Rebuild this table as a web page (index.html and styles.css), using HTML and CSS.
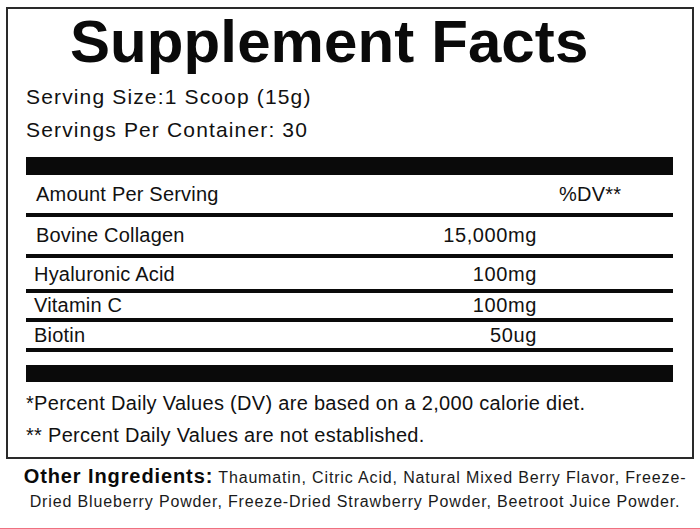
FILE: index.html
```html
<!DOCTYPE html>
<html>
<head>
<meta charset="utf-8">
<link rel="stylesheet" href="styles.css">
</head>
<body>
<div class="label">
  <h1 class="title">Supplement Facts</h1>
  <div class="serving">
    <div class="serving-line">Serving Size:1 Scoop (15g)</div>
    <div class="serving-line">Servings Per Container: 30</div>
  </div>
  <div class="bar bar-top"></div>
  <div class="row row-head"><span class="name">Amount Per Serving</span><span class="val"></span><span class="dv">%DV**</span></div>
  <div class="rule"></div>
  <div class="row row-bovine"><span class="name">Bovine Collagen</span><span class="val">15,000mg</span><span class="dv"></span></div>
  <div class="rule"></div>
  <div class="row row-hya"><span class="name tight">Hyaluronic Acid</span><span class="val">100mg</span><span class="dv"></span></div>
  <div class="rule"></div>
  <div class="row row-vit"><span class="name tight">Vitamin C</span><span class="val">100mg</span><span class="dv"></span></div>
  <div class="rule"></div>
  <div class="row row-bio"><span class="name tight">Biotin</span><span class="val">50ug</span><span class="dv"></span></div>
  <div class="rule"></div>
  <div class="bar bar-bottom"></div>
  <div class="notes">
    <div class="note">*Percent Daily Values (DV) are based on a 2,000 calorie diet.</div>
    <div class="note">** Percent Daily Values are not established.</div>
  </div>
</div>
<p class="other"><strong class="other-title">Other Ingredients:</strong> Thaumatin, Citric Acid, Natural Mixed Berry Flavor, Freeze-<br>Dried Blueberry Powder, Freeze-Dried Strawberry Powder, Beetroot Juice Powder.</p>
<div class="pink"></div>
</body>
</html>
```

FILE: styles.css
```css
html, body {
  margin: 0;
  padding: 0;
  background: #ffffff;
}

body {
  width: 700px;
  height: 529px;
  overflow: hidden;
  font-family: "Liberation Sans", Arial, Helvetica, sans-serif;
  color: #111111;
}

.label {
  margin: 7px 6px 0;
  border: 2px solid #2a2a2a;
  padding: 3px 19px 6px 18px;
}

.title {
  margin: 0 0 0 44px;
  font-size: 60px;
  line-height: 60px;
  font-weight: 700;
  color: #0a0a0a;
  letter-spacing: 0.1px;
}

.serving {
  margin-top: 8px;
  font-size: 21px;
  line-height: 33px;
}

.serving-line {
  letter-spacing: 1.15px;
}

.bar {
  background: #0a0a0a;
}

.bar-top {
  height: 18px;
  margin-top: 11px;
}

.bar-bottom {
  height: 17px;
  margin-top: 13px;
}

.rule {
  height: 4px;
  background: #0a0a0a;
}

.row {
  display: flex;
  font-size: 20px;
  letter-spacing: 0.2px;
  padding-left: 10px;
}

.name {
  flex: 1;
}

.name.tight {
  margin-left: -2px;
}

.val {
  width: 140px;
  text-align: right;
  letter-spacing: 0.6px;
}

.dv {
  width: 114px;
  padding-left: 22px;
}

.row-head {
  height: 38px;
  line-height: 38px;
}

.row-bovine {
  height: 37px;
  line-height: 37px;
}

.row-hya {
  height: 29px;
  padding-top: 2px;
  line-height: 29px;
}

.row-vit {
  height: 25px;
  line-height: 25px;
}

.row-bio {
  height: 25px;
  padding-top: 1px;
  line-height: 25px;
}

.notes {
  margin-top: 5px;
  font-size: 20px;
  line-height: 32px;
  letter-spacing: 0.3px;
}

.other {
  margin: 5px 0 0;
  padding-left: 10px;
  text-align: center;
  font-size: 16px;
  line-height: 24px;
  letter-spacing: 0.85px;
  color: #1a1a1a;
}

.other-title {
  font-size: 20px;
  font-weight: 700;
  letter-spacing: 0.9px;
  color: #0a0a0a;
}

.pink {
  height: 2px;
  margin-top: 14px;
  background: #f07080;
}
```
